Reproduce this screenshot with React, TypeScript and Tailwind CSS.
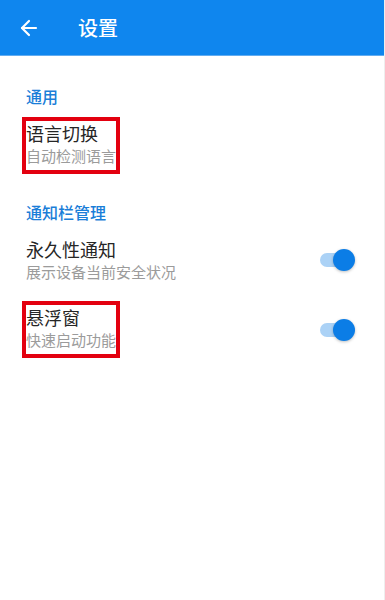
import { ArrowLeft } from 'lucide-react';

type Item = {
  title: string;
  desc: string;
  marked?: boolean;
  toggle?: boolean;
};

type Section = {
  label: string;
  items: Item[];
};

const sections: Section[] = [
  {
    label: '通用',
    items: [{ title: '语言切换', desc: '自动检测语言', marked: true }],
  },
  {
    label: '通知栏管理',
    items: [
      { title: '永久性通知', desc: '展示设备当前安全状况', toggle: true },
      { title: '悬浮窗', desc: '快速启动功能', marked: true, toggle: true },
    ],
  },
];

function Switch() {
  return (
    <div className="relative w-[35px] h-[22px] flex items-center">
      <div className="w-[30px] h-[14px] rounded-full bg-[#abd2f6]"></div>
      {/* thumb */}
      <div className="absolute right-0 top-0 w-[22px] h-[22px] rounded-full bg-[#0b7de6] shadow-[0_1px_3px_rgba(0,0,0,0.25)]"></div>
    </div>
  );
}

export default function App() {
  return (
    <div
      className="min-h-[600px] w-[385px] bg-white border-r border-[#eeeeee]"
      style={{ fontFamily: '"Noto Sans CJK SC", "Noto Sans", sans-serif' }}
    >
      {/* Toolbar */}
      <header className="h-[56px] bg-[#0f86ee] border-b border-[#62acf0] flex items-center">
        <ArrowLeft className="ml-[17px] text-white" size={24} strokeWidth={2.2} />
        <h1 className="ml-[37px] text-[20px] leading-none font-medium text-white">设置</h1>
      </header>

      <div className="pt-[29px] pl-[26px] pr-[29px]">
        {sections.map((section, i) => (
          <section key={section.label} className={i > 0 ? 'mt-[20px]' : ''}>
            <div className="text-[16px] leading-[22px] font-medium text-[#1a7ed8] mb-[3px]">{section.label}</div>
            {section.items.map((item) => (
              <div key={item.title} className="flex items-center justify-between py-[11px]">
                <div className={item.marked ? 'w-fit pb-[3px] outline-4 outline-[#e3000f]' : ''}>
                  <div className="text-[18px] leading-[24px] text-[#262626]">{item.title}</div>
                  <div className="text-[15px] leading-[22px] text-[#9b9b9b]">{item.desc}</div>
                </div>
                {item.toggle && <Switch />}
              </div>
            ))}
          </section>
        ))}
      </div>
    </div>
  );
}
